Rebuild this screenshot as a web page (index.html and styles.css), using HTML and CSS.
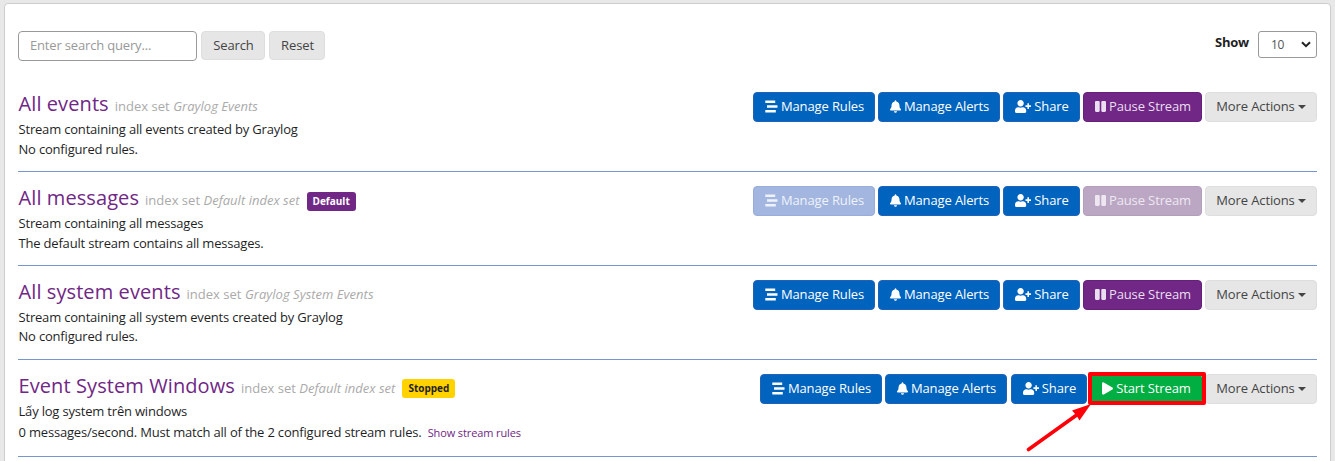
FILE: index.html
```html
<!DOCTYPE html>
<html lang="en">
<head>
<meta charset="utf-8">
<title>Streams</title>
<link rel="stylesheet" href="styles.css">
</head>
<body>
<svg class="sprite" aria-hidden="true">
  <symbol id="rules" viewBox="0 0 13 13"><path d="M.3.5h9.900v2.500H.3zM2 5.200h10.500v2.500H2zM.3 10h10.500v2.500H.3z"/></symbol>
  <symbol id="bell" viewBox="0 0 448 512"><path d="M224 512c35.300 0 63.900-28.600 63.900-64H160.100c0 35.400 28.600 64 63.900 64zm215.400-149.700c-19.300-20.800-55.500-52-55.500-154.300 0-77.700-54.500-139.900-127.900-155.200V32c0-17.700-14.300-32-32-32s-32 14.300-32 32v20.800C118.600 68.100 64.100 130.300 64.100 208c0 102.300-36.200 133.500-55.500 154.300C2.600 368.700 0 376.400 0 384c.1 16.400 13 32 32.100 32h383.800c19.100 0 32-15.600 32.100-32 0-7.600-2.600-15.300-8.600-21.700z"/></symbol>
  <symbol id="share" viewBox="0 0 640 512"><path d="M624 208h-64v-64c0-8.800-7.200-16-16-16h-32c-8.800 0-16 7.200-16 16v64h-64c-8.800 0-16 7.200-16 16v32c0 8.800 7.200 16 16 16h64v64c0 8.800 7.200 16 16 16h32c8.800 0 16-7.200 16-16v-64h64c8.800 0 16-7.200 16-16v-32c0-8.800-7.200-16-16-16zM224 256c70.700 0 128-57.300 128-128S294.700 0 224 0 96 57.300 96 128s57.300 128 128 128zm89.600 32h-16.700c-22.200 10.200-46.900 16-72.900 16s-50.600-5.800-72.900-16h-16.700C60.200 288 0 348.200 0 422.400V464c0 26.500 21.500 48 48 48h352c26.500 0 48-21.500 48-48v-41.600c0-74.200-60.200-134.400-134.400-134.400z"/></symbol>
  <symbol id="pause" viewBox="0 0 448 512"><path d="M144 479H48c-26.500 0-48-21.500-48-48V79c0-26.500 21.500-48 48-48h96c26.500 0 48 21.500 48 48v352c0 26.500-21.500 48-48 48zm304-48V79c0-26.500-21.500-48-48-48h-96c-26.500 0-48 21.500-48 48v352c0 26.500 21.500 48 48 48h96c26.500 0 48-21.500 48-48z"/></symbol>
  <symbol id="play" viewBox="0 0 448 512"><path d="M424.400 214.700L72.400 6.600C43.800-10.300 0 6.100 0 47.900V464c0 37.500 40.700 60.100 72.400 41.300l352-208c31.400-18.500 31.500-64.100 0-82.600z"/></symbol>
</svg>
<main class="panel">
  <header class="toolbar">
    <form class="search">
      <input class="query" type="text" placeholder="Enter search query...">
      <button class="btn gray search-btn" type="button">Search</button>
      <button class="btn gray reset-btn" type="button">Reset</button>
    </form>
    <div class="page-size">
      <span class="show">Show</span>
      <div class="select"><span>10</span><svg class="chevron" viewBox="0 0 10 7"><path d="M1 1.200l4 4 4-4"/></svg></div>
    </div>
  </header>

  <section class="stream">
    <div class="info">
      <h2 class="title"><a class="name">All events</a><small class="index">index set <em>Graylog Events</em></small></h2>
      <p class="line">Stream containing all events created by Graylog</p>
      <p class="line">No configured rules.</p>
    </div>
    <div class="actions">
      <button class="btn blue rules"><svg class="i-rules"><use href="#rules"/></svg>Manage Rules</button>
      <button class="btn blue alerts"><svg class="i-bell"><use href="#bell"/></svg>Manage Alerts</button>
      <button class="btn blue share"><svg class="i-share"><use href="#share"/></svg>Share</button>
      <button class="btn purple pause"><svg class="i-pause"><use href="#pause"/></svg>Pause Stream</button>
      <button class="btn gray more">More Actions<span class="caret"></span></button>
    </div>
  </section>

  <section class="stream">
    <div class="info">
      <h2 class="title"><a class="name">All messages</a><small class="index">index set <em>Default index set</em></small><span class="badge default">Default</span></h2>
      <p class="line">Stream containing all messages</p>
      <p class="line">The default stream contains all messages.</p>
    </div>
    <div class="actions">
      <button class="btn blue rules faded"><svg class="i-rules"><use href="#rules"/></svg>Manage Rules</button>
      <button class="btn blue alerts"><svg class="i-bell"><use href="#bell"/></svg>Manage Alerts</button>
      <button class="btn blue share"><svg class="i-share"><use href="#share"/></svg>Share</button>
      <button class="btn purple pause faded"><svg class="i-pause"><use href="#pause"/></svg>Pause Stream</button>
      <button class="btn gray more">More Actions<span class="caret"></span></button>
    </div>
  </section>

  <section class="stream">
    <div class="info compact">
      <h2 class="title"><a class="name">All system events</a><small class="index">index set <em>Graylog System Events</em></small></h2>
      <p class="line">Stream containing all system events created by Graylog</p>
      <p class="line">No configured rules.</p>
    </div>
    <div class="actions">
      <button class="btn blue rules"><svg class="i-rules"><use href="#rules"/></svg>Manage Rules</button>
      <button class="btn blue alerts"><svg class="i-bell"><use href="#bell"/></svg>Manage Alerts</button>
      <button class="btn blue share"><svg class="i-share"><use href="#share"/></svg>Share</button>
      <button class="btn purple pause"><svg class="i-pause"><use href="#pause"/></svg>Pause Stream</button>
      <button class="btn gray more">More Actions<span class="caret"></span></button>
    </div>
  </section>

  <section class="stream last">
    <div class="info">
      <h2 class="title"><a class="name">Event System Windows</a><small class="index">index set <em>Default index set</em></small><span class="badge stopped">Stopped</span></h2>
      <p class="line">Lấy log system trên windows</p>
      <p class="line rules-line">0 messages/second. Must match all of the 2 configured stream rules. <a class="show-rules">Show stream rules</a></p>
    </div>
    <div class="actions">
      <button class="btn blue rules"><svg class="i-rules"><use href="#rules"/></svg>Manage Rules</button>
      <button class="btn blue alerts"><svg class="i-bell"><use href="#bell"/></svg>Manage Alerts</button>
      <button class="btn blue share narrow"><svg class="i-share"><use href="#share"/></svg>Share</button>
      <div class="highlight">
        <button class="btn green start"><svg class="i-play"><use href="#play"/></svg>Start Stream</button>
        <span class="frame"></span>
        <svg class="arrow" viewBox="0 0 66 50"><path class="shaft" d="M2.500 46.500L50 12.500"/><path class="head" d="M65 1L53.500 17.500 50.500 12.500 46 7.500z"/></svg>
      </div>
      <button class="btn gray more">More Actions<span class="caret"></span></button>
    </div>
  </section>
</main>
</body>
</html>
```

FILE: styles.css
```css
* { box-sizing: border-box; }
body {
  margin: 0;
  height: 461px;
  padding: 3px 4px 0;
  overflow: hidden;
  background: #e8e8e8;
  color: #1f1f1f;
  font: 13px/20px "Open Sans", sans-serif;
}
.sprite { display: none; }
.panel {
  height: 480px;
  padding: 27px 13px 0;
  border: 1px solid #cdcdcd;
  border-radius: 4px;
  background: #fff;
}
.toolbar { display: flex; justify-content: space-between; height: 47px; }
.search { display: flex; align-items: flex-start; gap: 4px; }
.query {
  width: 179px;
  height: 30px;
  padding: 0 11px 2px;
  border: 1px solid #999;
  border-radius: 4px;
  font: inherit;
  letter-spacing: -.17px;
}
.query::placeholder { color: #999; opacity: 1; }
.page-size { display: flex; align-items: flex-start; gap: 9px; }
.show { line-height: 22px; font-weight: 700; letter-spacing: -.25px; }
.select {
  display: flex;
  align-items: center;
  justify-content: space-between;
  width: 59px;
  height: 27px;
  padding: 0 5px 0 12px;
  border: 1px solid #999;
  border-radius: 3px;
  color: #555;
  font-size: 12px;
  letter-spacing: -.4px;
}
.chevron { width: 10px; height: 7px; fill: none; stroke: #222; stroke-width: 2; }
.btn {
  display: flex;
  align-items: center;
  justify-content: center;
  flex: none;
  height: 30px;
  padding: 0 0 2px;
  border: 1px solid;
  border-radius: 4px;
  color: #fff;
  font: inherit;
  letter-spacing: -.12px;
  white-space: nowrap;
}
.btn svg { flex: none; fill: currentColor; margin: 1px 3px 0 1px; }
.gray { background: #e6e6e6; border-color: #dedede; color: #444; }
.blue { background: #0063be; border-color: #1f62b8; }
.purple { background: #702785; border-color: #64207b; color: #eadff0; }
.green { background: #00ae42; border-color: #00a03a; }
.blue.faded { background: #a2b6df; border-color: #98addb; color: #eef2fb; }
.purple.faded { background: #bba7c4; border-color: #b49ebe; color: #eee7f1; }
.search-btn { width: 64px; height: 29px; padding: 0 0 1px 1px; }
.reset-btn { width: 56px; height: 29px; padding: 0 0 1px 1px; }
.rules, .alerts { width: 122px; }
.share { width: 77px; }
.narrow { width: 76px; margin-left: 1px; }
.pause { width: 119px; }
.more { width: 112px; }
.start { width: 112px; }
.i-rules { width: 13px; height: 13px; }
.i-bell { width: 11px; height: 13px; }
.i-share { width: 16px; height: 13px; }
.i-pause, .i-play { width: 11px; height: 13px; }
.caret {
  margin: 2px 0 0 3px;
  border: 3.500px solid transparent;
  border-width: 4px 4px 0;
  border-top-color: #444;
}
.stream {
  display: flex;
  justify-content: space-between;
  height: 94px;
  padding-top: 14px;
  border-bottom: 1px solid #7894cf;
}
.last { height: 97px; }
.info { padding-left: .5px; }
.title {
  display: flex;
  align-items: baseline;
  height: 27px;
  margin: 0;
  font-size: 20px;
  font-weight: 400;
  line-height: 24px;
  white-space: nowrap;
}
.name { color: #702785; letter-spacing: .09px; }
.index { margin-left: 6px; color: #aaa; font-size: 13px; letter-spacing: .02px; }
.badge {
  align-self: flex-start;
  height: 19px;
  margin: 6px 0 0 7px;
  padding: 0 6px;
  border-radius: 3px;
  font-size: 10px;
  font-weight: 700;
  line-height: 18px;
}
.default { background: #702785; color: #fff; }
.stopped { margin-top: 5px; background: #ffd200; color: #1f1f1f; }
.line { margin: 0; letter-spacing: -.19px; white-space: nowrap; }
.compact .line:last-child { line-height: 18px; }
.rules-line { line-height: 22px; }
.show-rules { margin-left: 3px; color: #702785; font-size: 11px; letter-spacing: -.12px; }
.actions { display: flex; align-items: flex-start; gap: 3px; }
.highlight { position: relative; }
.frame {
  position: absolute;
  inset: -2px -4px -1px -2px;
  border: 4px solid #ff0009;
  border-radius: 2px;
}
.arrow { position: absolute; top: 29px; left: -64px; width: 66px; height: 50px; }
.shaft { fill: none; stroke: #ff0009; stroke-width: 3.600; stroke-linecap: round; }
.head { fill: #ff0009; }
```
